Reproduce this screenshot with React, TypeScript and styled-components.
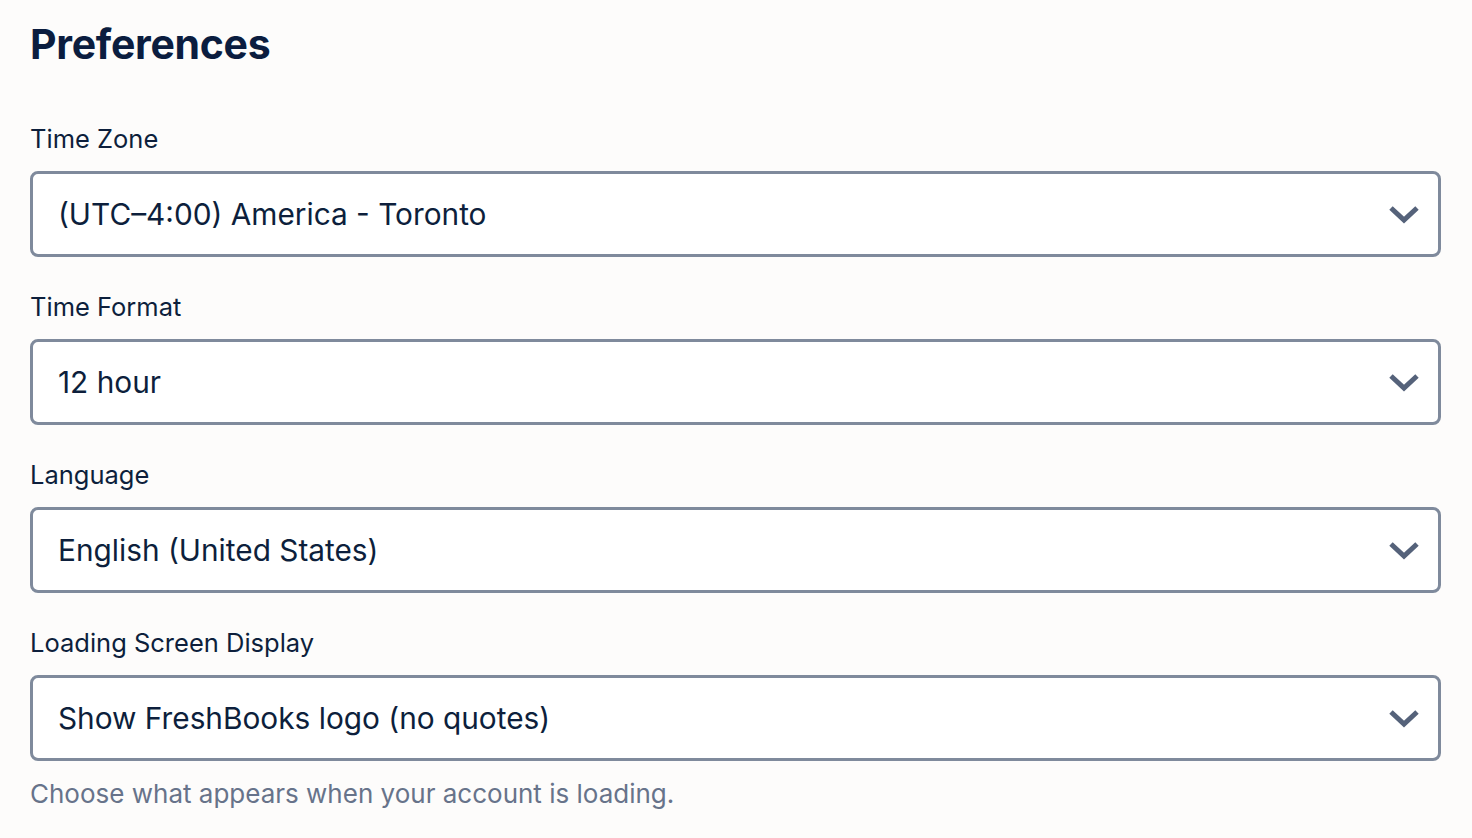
import React from 'react'
import styled, { createGlobalStyle } from 'styled-components'

const GlobalStyle = createGlobalStyle`
  body {
    margin: 0;
    background: #fdfcfb;
    font-family: 'Inter', 'Noto Sans', sans-serif;
    color: #0d1f3c;
  }
`

const Page = styled.div`
  padding: 20px 31px 0 30px;
`
const Title = styled.h1`
  margin: 0 0 55px 0;
  font-size: 41px;
  font-weight: 700;
  letter-spacing: -0.3px;
  line-height: 48px;
  color: #0b1d3f;
`
const Field = styled.div`
  display: flex;
  flex-direction: column;
  margin-bottom: 34px;
`
const Label = styled.label`
  font-size: 25.5px;
  line-height: 32px;
  margin-bottom: 16px;
  color: #0d1f3c;
`
const SelectBox = styled.div`
  box-sizing: border-box;
  height: 86px;
  display: flex;
  align-items: center;
  justify-content: space-between;
  padding: 0 18px 0 25px;
  border: 3px solid #7f8a9c;
  border-radius: 8px;
  background: #fff;
`
const Value = styled.span`
  font-size: 29.8px;
  color: #0d1f3c;
`
const Help = styled.div`
  margin-top: -17px;
  font-size: 26px;
  line-height: 32px;
  color: #67738a;
`

function Chevron() {
  return (
    <svg width="32" height="20" viewBox="0 0 32 20">
      <path d="M3 4 L16 16 L29 4" fill="none" stroke="#55627a" strokeWidth="5" strokeLinejoin="miter" />
    </svg>
  )
}

const fields = [
  { label: 'Time Zone', value: '(UTC–4:00) America - Toronto' },
  { label: 'Time Format', value: '12 hour' },
  { label: 'Language', value: 'English (United States)' },
  { label: 'Loading Screen Display', value: 'Show FreshBooks logo (no quotes)' },
]

export default function App() {
  return (
    <Page>
      <GlobalStyle />
      <Title>Preferences</Title>
      {fields.map(f => (
        <Field key={f.label}>
          <Label>{f.label}</Label>
          <SelectBox>
            <Value>{f.value}</Value>
            <Chevron />
          </SelectBox>
        </Field>
      ))}
      <Help>Choose what appears when your account is loading.</Help>
    </Page>
  )
}
